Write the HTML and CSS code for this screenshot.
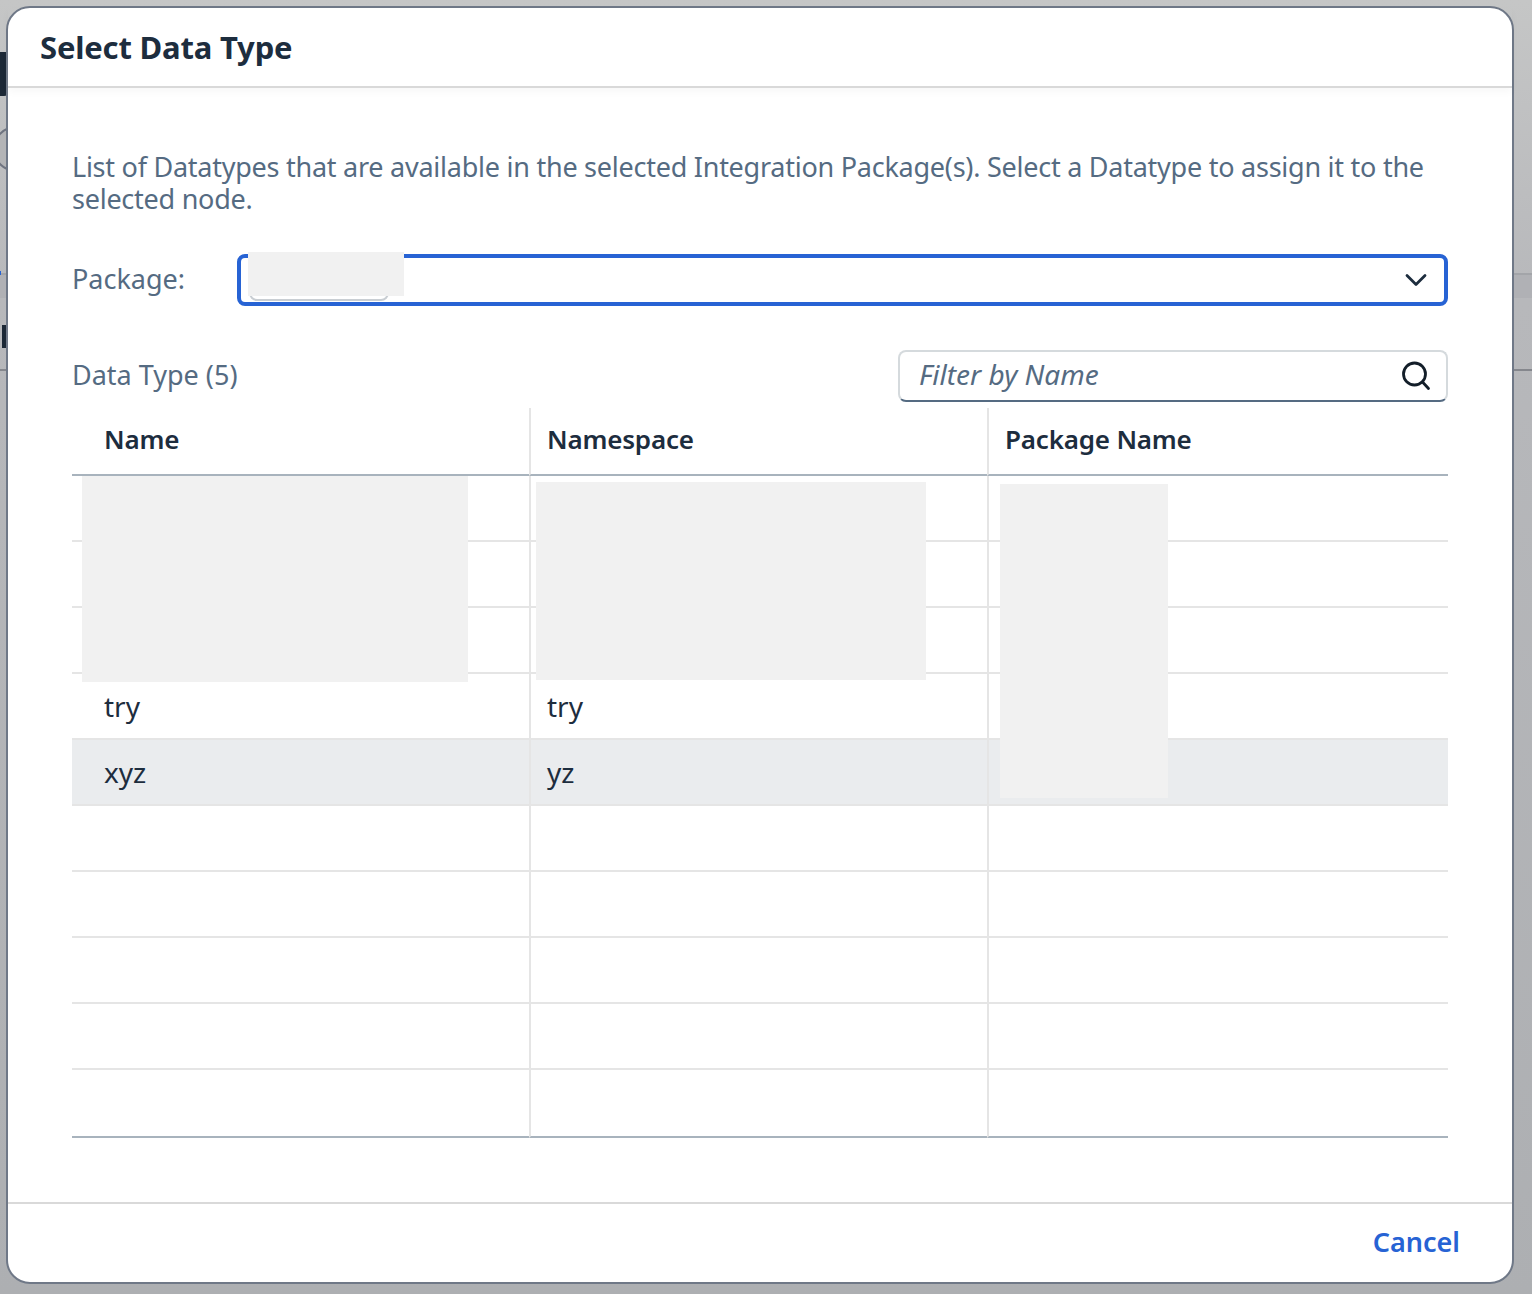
FILE: index.html
```html
<!DOCTYPE html>
<html lang="en">
<head>
    <meta charset="UTF-8">
    <title>Select Data Type</title>
    <link rel="stylesheet" href="styles.css">
</head>
<body>
    <!-- bits of the page behind the dialog -->
    <div class="behind behind-band"></div>
    <div class="behind behind-tick"></div>
    <div class="behind behind-tab"></div>
    <div class="behind behind-circle"></div>
    <div class="behind behind-mark"></div>
    <div class="behind behind-line"></div>

    <div class="dialog">
        <header class="dialog-header">
            <h1>Select Data Type</h1>
        </header>

        <div class="dialog-content">
            <p class="intro">List of Datatypes that are available in the selected Integration Package(s). Select a Datatype to assign it to the selected node.</p>

            <div class="package-row">
                <label class="package-label">Package:</label>
                <div class="package-select">
                    <span class="package-token"></span>
                    <svg class="icon-chevron" width="22" height="14" viewBox="0 0 22 14">
                        <path d="M2 2.5 L11 11.5 L20 2.5" fill="none" stroke="#1d2d3e" stroke-width="2.8" stroke-linecap="round" stroke-linejoin="round"/>
                    </svg>
                </div>
            </div>

            <div class="toolbar">
                <span class="table-title">Data Type (5)</span>
                <div class="filter-box">
                    <span class="filter-placeholder">Filter by Name</span>
                    <svg class="icon-search" width="30" height="30" viewBox="0 0 30 30">
                        <circle cx="13.5" cy="13" r="11" fill="none" stroke="#131e29" stroke-width="2.8"/>
                        <path d="M21.5 21 L27.5 27.5" fill="none" stroke="#131e29" stroke-width="2.8" stroke-linecap="round"/>
                    </svg>
                </div>
            </div>

            <table class="type-table">
                <thead>
                    <tr><th class="col-name">Name</th><th class="col-namespace">Namespace</th><th class="col-package">Package Name</th></tr>
                </thead>
                <tbody>
                    <tr><td class="col-name"></td><td></td><td></td></tr>
                    <tr><td class="col-name"></td><td></td><td></td></tr>
                    <tr><td class="col-name"></td><td></td><td></td></tr>
                    <tr><td class="col-name">try</td><td>try</td><td></td></tr>
                    <tr class="selected"><td class="col-name">xyz</td><td>yz</td><td></td></tr>
                    <tr><td class="col-name"></td><td></td><td></td></tr>
                    <tr><td class="col-name"></td><td></td><td></td></tr>
                    <tr><td class="col-name"></td><td></td><td></td></tr>
                    <tr><td class="col-name"></td><td></td><td></td></tr>
                    <tr><td class="col-name"></td><td></td><td></td></tr>
                </tbody>
            </table>
        </div>

        <footer class="dialog-footer">
            <button class="cancel-btn">Cancel</button>
        </footer>

        <!-- redacted areas painted over the screenshot -->
        <div class="redact redact-package"></div>
        <div class="redact redact-name"></div>
        <div class="redact redact-namespace"></div>
        <div class="redact redact-pkgname"></div>
    </div>
</body>
</html>
```

FILE: styles.css
```css
* {
    box-sizing: border-box;
}
html, body {
    margin: 0;
    height: 100%;
}
body {
    position: relative;
    height: 1294px;
    padding: 6px 18px 0 6px;
    overflow: hidden;
    background: linear-gradient(#c5c6c6, #b7b8bb 300px, #adafb2);
    font-family: "Noto Sans", sans-serif;
    color: #1d2d3e;
}

.behind {
    position: absolute;
}
.behind-band {
    left: 0;
    top: 273px;
    width: 100%;
    height: 25px;
    background: #b0b1b5;
    border-top: 2px solid #a3a5a9;
}
.behind-tick {
    left: 0;
    top: 271px;
    width: 1px;
    height: 4px;
    background: #2763d4;
}
.behind-tab {
    left: 0;
    top: 52px;
    width: 8px;
    height: 44px;
    background: #1c2836;
    border-radius: 0 0 4px 0;
}
.behind-circle {
    left: -7px;
    top: 126px;
    width: 46px;
    height: 46px;
    border: 2px solid #6f7480;
    border-radius: 50%;
    background: #b3b4b6;
}
.behind-mark {
    left: 2px;
    top: 325px;
    width: 5px;
    height: 23px;
    background: #1c2836;
}
.behind-line {
    left: 0;
    top: 369px;
    width: 100%;
    height: 2px;
    background: #85878d;
}

.dialog {
    position: relative;
    width: 1508px;
    height: 1278px;
    display: flex;
    flex-direction: column;
    background: #fff;
    border: 2px solid #6f7887;
    border-radius: 24px;
}

.dialog-header {
    height: 80px;
    padding: 0 32px;
    display: flex;
    align-items: center;
    border-bottom: 2px solid #d9d9d9;
    box-shadow: 0 4px 8px rgba(0, 0, 0, 0.03);
}
.dialog-header h1 {
    margin: 0;
    font-size: 31px;
    font-weight: 700;
    letter-spacing: -0.18px;
    color: #1d2d3e;
}

.dialog-content {
    flex: 1;
    padding: 63px 64px 0;
}
.intro {
    margin: 0;
    font-size: 27px;
    line-height: 32px;
    letter-spacing: -0.25px;
    color: #556b82;
}

.package-row {
    display: flex;
    align-items: center;
    margin-top: 39px;
}
.package-label {
    width: 165px;
    padding-bottom: 3px;
    font-size: 27px;
    color: #556b82;
}
.package-select {
    width: 1211px;
    height: 52px;
    display: flex;
    align-items: center;
    justify-content: space-between;
    padding: 0 17px 0 8px;
    border: 4px solid #2763d4;
    border-radius: 8px;
}
.package-token {
    width: 140px;
    height: 40px;
    margin-top: 2px;
    border: 2px solid #c9ced3;
    border-radius: 8px;
}

.toolbar {
    display: flex;
    align-items: center;
    justify-content: space-between;
    margin-top: 44px;
}
.table-title {
    padding-bottom: 3px;
    font-size: 27px;
    color: #556b82;
}
.filter-box {
    width: 550px;
    height: 52px;
    display: flex;
    align-items: center;
    justify-content: space-between;
    padding: 0 15px 0 19px;
    border: 2px solid #d5dadd;
    border-bottom-color: #556b82;
    border-radius: 8px;
}
.filter-placeholder {
    padding-bottom: 4px;
    font-size: 28px;
    font-style: italic;
    color: #556b82;
}

.type-table {
    width: 1376px;
    margin-top: 6px;
    border-collapse: separate;
    border-spacing: 0;
    table-layout: fixed;
    font-size: 28px;
}
.type-table th, .type-table td {
    padding: 0 16px;
    text-align: left;
    border-left: 2px solid #e5e5e5;
}
.type-table .col-name {
    width: 457px;
    padding-left: 32px;
    border-left: none;
}
.type-table .col-namespace {
    width: 458px;
}
.type-table .col-package {
    width: 461px;
}
.type-table th {
    height: 68px;
    padding-bottom: 4px;
    font-size: 26px;
    font-weight: 600;
    letter-spacing: -0.2px;
    border-bottom: 2px solid #a8b3bd;
}
.type-table td {
    height: 66px;
    border-bottom: 2px solid #e5e5e5;
}
.type-table tbody tr:last-child td {
    height: 68px;
    border-bottom: 2px solid #a8b3bd;
}
.type-table .selected td {
    background: #eaecee;
}

.dialog-footer {
    height: 80px;
    padding: 0 52px;
    display: flex;
    align-items: center;
    justify-content: flex-end;
    border-top: 2px solid #d9d9d9;
}
.cancel-btn {
    padding: 0 0 4px;
    border: none;
    background: none;
    font-family: inherit;
    font-size: 27px;
    font-weight: 600;
    color: #2763d4;
    cursor: pointer;
}

.redact {
    position: absolute;
    background: #f1f1f1;
}
.redact-package {
    left: 240px;
    top: 244px;
    width: 156px;
    height: 44px;
}
.redact-name {
    left: 74px;
    top: 468px;
    width: 386px;
    height: 206px;
}
.redact-namespace {
    left: 528px;
    top: 474px;
    width: 390px;
    height: 198px;
}
.redact-pkgname {
    left: 992px;
    top: 476px;
    width: 168px;
    height: 314px;
}
```
